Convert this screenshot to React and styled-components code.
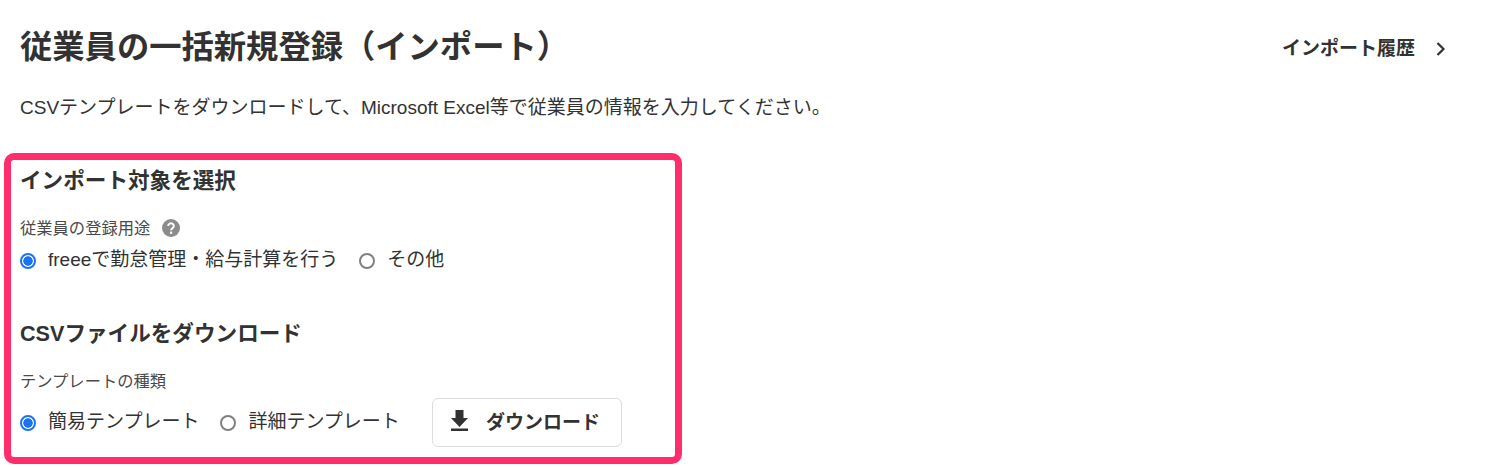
import React from "react";
import styled, { createGlobalStyle } from "styled-components";

const Global = createGlobalStyle`
  html, body { margin: 0; padding: 0; background: #fff; }
  body {
    font-family: "Liberation Sans", "Noto Sans CJK JP", sans-serif;
    color: #323232;
  }
`;

const Page = styled.div`
  width: 1493px;
  height: 467px;
  overflow: hidden;
`;

const Header = styled.header`
  display: flex;
  justify-content: space-between;
  align-items: center;
  padding: 24px 46px 0 20px;
  height: 46px;
`;

const Title = styled.h1`
  margin: 0;
  font-size: 32.3px;
  line-height: 46px;
  font-weight: 700;
`;

const HistoryLink = styled.a`
  display: flex;
  align-items: center;
  gap: 20px;
  padding-bottom: 2px;
  font-size: 19px;
  font-weight: 700;
  color: #323232;

  svg {
    margin-top: 5px;
  }
`;

const Lead = styled.p`
  margin: 0;
  padding: 24px 0 0 20px;
  font-size: 19px;
  line-height: 27px;
`;

const Frame = styled.section`
  box-sizing: border-box;
  width: 678px;
  height: 311px;
  margin: 32px 0 0 4px;
  padding: 5px 9px 0;
  border: 7px solid #ff2d6b;
  border-radius: 10px;
`;

const Heading = styled.h2`
  margin: ${(p) => p.$top || 0}px 0 0;
  font-size: 21.6px;
  line-height: 32px;
  font-weight: 700;
`;

const Label = styled.div`
  display: flex;
  align-items: center;
  gap: 12px;
  margin-top: ${(p) => p.$top}px;
  font-size: 16.3px;
  line-height: 24px;
  color: #4a4a4a;
`;

const Row = styled.div`
  display: flex;
  align-items: center;
  margin-top: ${(p) => p.$top}px;
`;

const RadioLabel = styled.label`
  display: flex;
  align-items: center;
  gap: 12px;
  margin-right: ${(p) => p.$gap}px;
  color: #323232;
`;

const RadioText = styled.span`
  padding-bottom: 2px;
  font-size: 19px;
  line-height: 25px;
`;

const RadioMark = styled.span`
  box-sizing: border-box;
  width: 16px;
  height: 16px;
  border-radius: 50%;
  border: 2px solid ${(p) => (p.$on ? "#1a73f0" : "#808080")};
  background: ${(p) => (p.$on ? "radial-gradient(circle, #1a73f0 0 4.4px, #fff 5px)" : "#fff")};
`;

const Button = styled.button`
  display: flex;
  align-items: center;
  gap: 18px;
  box-sizing: border-box;
  width: 190px;
  height: 49px;
  padding: 0 0 5px 18px;
  background: #fff;
  border: 1px solid #dcdcdc;
  border-radius: 6px;
  font-family: inherit;
  font-size: 19px;
  font-weight: 700;
  color: #323232;
`;

const Help = () => (
  <svg width="18" height="18" viewBox="0 0 18 18">
    <circle cx="9" cy="9" r="9" fill="#8c8c8c" />
    <path d="M6.2 7a2.8 2.6 0 1 1 4.4 2.1c-1 .7-1.5 1.1-1.5 2.2" fill="none" stroke="#fff" strokeWidth="2" />
    <rect x="8" y="12.6" width="2.2" height="2.2" fill="#fff" />
  </svg>
);

const Chevron = () => (
  <svg width="12" height="16" viewBox="0 0 12 16">
    <path d="M2.5 2l6 6-6 6" fill="none" stroke="#323232" strokeWidth="2.2" />
  </svg>
);

const DownloadIcon = () => (
  <svg width="17" height="21" viewBox="0 0 17 21">
    <path d="M4.5 0h8v8H17l-8.5 9L0 8h4.5z" fill="#323232" />
    <rect x="0" y="18.5" width="17" height="2.5" fill="#323232" />
  </svg>
);

const Radio = ({ on, gap, children }) => (
  <RadioLabel $gap={gap}>
    <RadioMark $on={on} />
    <RadioText>{children}</RadioText>
  </RadioLabel>
);

export default function App() {
  return (
    <Page>
      <Global />
      <Header>
        <Title>従業員の一括新規登録（インポート）</Title>
        <HistoryLink>
          インポート履歴
          <Chevron />
        </HistoryLink>
      </Header>
      <Lead>CSVテンプレートをダウンロードして、Microsoft Excel等で従業員の情報を入力してください。</Lead>
      <Frame>
        <Heading>インポート対象を選択</Heading>
        <Label $top={19}>
          従業員の登録用途
          <Help />
        </Label>
        <Row $top={7}>
          <Radio on gap={21}>freeeで勤怠管理・給与計算を行う</Radio>
          <Radio>その他</Radio>
        </Row>
        <Heading $top={44}>CSVファイルをダウンロード</Heading>
        <Label $top={19}>テンプレートの種類</Label>
        <Row $top={5}>
          <Radio on gap={21}>簡易テンプレート</Radio>
          <Radio gap={32}>詳細テンプレート</Radio>
          <Button>
            <DownloadIcon />
            ダウンロード
          </Button>
        </Row>
      </Frame>
    </Page>
  );
}
